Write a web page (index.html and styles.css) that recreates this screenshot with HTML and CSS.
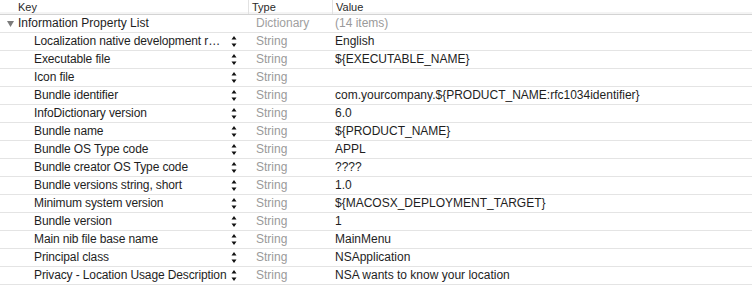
FILE: index.html
```html
<!DOCTYPE html>
<html>
<head>
<meta charset="utf-8">
<link rel="stylesheet" href="styles.css">
</head>
<body>
<div class="plist">
  <div class="head">
    <div class="hcell hkey">Key</div>
    <div class="hcell htype">Type</div>
    <div class="hcell hval">Value</div>
  </div>
  <div class="row root">
    <div class="key"><svg class="disc" width="7" height="6" viewBox="0 0 7 6"><path d="M0 0H7L3.5 6Z"/></svg><span class="ktext">Information Property List</span></div>
    <div class="type">Dictionary</div>
    <div class="val muted">(14 items)</div>
  </div>
  <div class="row"><div class="key child"><span class="ktext">Localization native development r…</span><svg class="step" width="6" height="11" viewBox="0 0 6 11"><path d="M0.5 3.5H5.5L3 0Z M0.5 7.5H5.5L3 11Z"/></svg></div><div class="type">String</div><div class="val">English</div></div>
  <div class="row"><div class="key child"><span class="ktext">Executable file</span><svg class="step" width="6" height="11" viewBox="0 0 6 11"><path d="M0.5 3.5H5.5L3 0Z M0.5 7.5H5.5L3 11Z"/></svg></div><div class="type">String</div><div class="val">${EXECUTABLE_NAME}</div></div>
  <div class="row"><div class="key child"><span class="ktext">Icon file</span><svg class="step" width="6" height="11" viewBox="0 0 6 11"><path d="M0.5 3.5H5.5L3 0Z M0.5 7.5H5.5L3 11Z"/></svg></div><div class="type">String</div><div class="val"></div></div>
  <div class="row"><div class="key child"><span class="ktext">Bundle identifier</span><svg class="step" width="6" height="11" viewBox="0 0 6 11"><path d="M0.5 3.5H5.5L3 0Z M0.5 7.5H5.5L3 11Z"/></svg></div><div class="type">String</div><div class="val">com.yourcompany.${PRODUCT_NAME:rfc1034identifier}</div></div>
  <div class="row"><div class="key child"><span class="ktext">InfoDictionary version</span><svg class="step" width="6" height="11" viewBox="0 0 6 11"><path d="M0.5 3.5H5.5L3 0Z M0.5 7.5H5.5L3 11Z"/></svg></div><div class="type">String</div><div class="val">6.0</div></div>
  <div class="row"><div class="key child"><span class="ktext">Bundle name</span><svg class="step" width="6" height="11" viewBox="0 0 6 11"><path d="M0.5 3.5H5.5L3 0Z M0.5 7.5H5.5L3 11Z"/></svg></div><div class="type">String</div><div class="val">${PRODUCT_NAME}</div></div>
  <div class="row"><div class="key child"><span class="ktext">Bundle OS Type code</span><svg class="step" width="6" height="11" viewBox="0 0 6 11"><path d="M0.5 3.5H5.5L3 0Z M0.5 7.5H5.5L3 11Z"/></svg></div><div class="type">String</div><div class="val">APPL</div></div>
  <div class="row"><div class="key child"><span class="ktext">Bundle creator OS Type code</span><svg class="step" width="6" height="11" viewBox="0 0 6 11"><path d="M0.5 3.5H5.5L3 0Z M0.5 7.5H5.5L3 11Z"/></svg></div><div class="type">String</div><div class="val">????</div></div>
  <div class="row"><div class="key child"><span class="ktext">Bundle versions string, short</span><svg class="step" width="6" height="11" viewBox="0 0 6 11"><path d="M0.5 3.5H5.5L3 0Z M0.5 7.5H5.5L3 11Z"/></svg></div><div class="type">String</div><div class="val">1.0</div></div>
  <div class="row"><div class="key child"><span class="ktext">Minimum system version</span><svg class="step" width="6" height="11" viewBox="0 0 6 11"><path d="M0.5 3.5H5.5L3 0Z M0.5 7.5H5.5L3 11Z"/></svg></div><div class="type">String</div><div class="val">${MACOSX_DEPLOYMENT_TARGET}</div></div>
  <div class="row"><div class="key child"><span class="ktext">Bundle version</span><svg class="step" width="6" height="11" viewBox="0 0 6 11"><path d="M0.5 3.5H5.5L3 0Z M0.5 7.5H5.5L3 11Z"/></svg></div><div class="type">String</div><div class="val">1</div></div>
  <div class="row"><div class="key child"><span class="ktext">Main nib file base name</span><svg class="step" width="6" height="11" viewBox="0 0 6 11"><path d="M0.5 3.5H5.5L3 0Z M0.5 7.5H5.5L3 11Z"/></svg></div><div class="type">String</div><div class="val">MainMenu</div></div>
  <div class="row"><div class="key child"><span class="ktext">Principal class</span><svg class="step" width="6" height="11" viewBox="0 0 6 11"><path d="M0.5 3.5H5.5L3 0Z M0.5 7.5H5.5L3 11Z"/></svg></div><div class="type">String</div><div class="val">NSApplication</div></div>
  <div class="row"><div class="key child"><span class="ktext">Privacy - Location Usage Description</span><svg class="step" width="6" height="11" viewBox="0 0 6 11"><path d="M0.5 3.5H5.5L3 0Z M0.5 7.5H5.5L3 11Z"/></svg></div><div class="type">String</div><div class="val">NSA wants to know your location</div></div>
</div>
</body>
</html>
```

FILE: styles.css
```css
html, body {
  margin: 0;
  padding: 0;
  background: #ffffff;
}
.plist {
  font-family: "Liberation Sans", Arial, sans-serif;
  font-size: 12px;
  color: #1e1e1e;
  width: 752px;
}
.head {
  display: grid;
  grid-template-columns: 248px 84px 1fr;
  height: 14px;
  border-bottom: 1px solid #d3d3d3;
  box-shadow: 0 -2px 0 #f4f4f4 inset;
  font-size: 11px;
  color: #2a2a2a;
  line-height: 14px;
}
.hcell {
  white-space: nowrap;
}
.hkey {
  padding-left: 18px;
}
.htype, .hval {
  border-left: 1px solid #e2e2e2;
  padding-left: 3px;
}
.row {
  display: grid;
  grid-template-columns: 249px 84px 1fr;
  height: 17px;
  border-bottom: 1px solid #e4e4e4;
  line-height: 17px;
  align-items: center;
}
.key {
  display: flex;
  align-items: center;
  height: 17px;
  min-width: 0;
}
.root .key {
  padding-left: 7px;
}
.disc {
  fill: #7b7b7b;
  margin-right: 4px;
  flex: none;
}
.child {
  padding-left: 34px;
  padding-right: 12px;
}
.ktext {
  flex: 1;
  min-width: 0;
  white-space: nowrap;
}
.child .ktext {
  letter-spacing: -0.12px;
}
.step {
  fill: #111;
  flex: none;
  margin-left: 2px;
}
.type {
  color: #9a9a9a;
  padding-left: 7px;
  white-space: nowrap;
}
.root .type {
  color: #a0a0a0;
}
.val {
  padding-left: 2px;
  white-space: nowrap;
}
.val.muted {
  color: #9a9a9a;
}
```
